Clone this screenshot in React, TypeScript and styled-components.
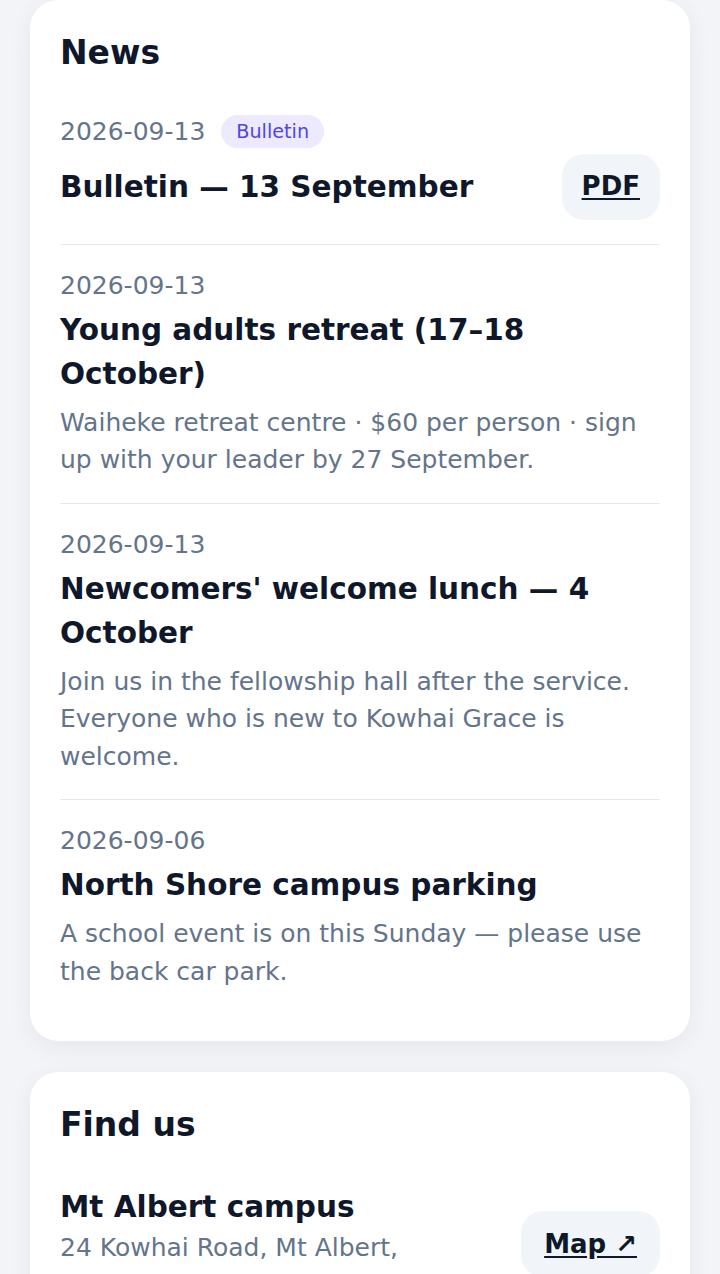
import React from "react";
import styled, { createGlobalStyle } from "styled-components";

interface NewsItem {
  id: string;
  date: string;
  tag?: string;
  title: string;
  body?: string;
  pdf?: boolean;
}

const news: NewsItem[] = [
  { id: "n1", date: "2026-09-13", tag: "Bulletin", title: "Bulletin — 13 September", pdf: true },
  {
    id: "n2",
    date: "2026-09-13",
    title: "Young adults retreat (17–18 October)",
    body: "Waiheke retreat centre · $60 per person · sign up with your leader by 27 September.",
  },
  {
    id: "n3",
    date: "2026-09-13",
    title: "Newcomers' welcome lunch — 4 October",
    body: "Join us in the fellowship hall after the service. Everyone who is new to Kowhai Grace is welcome.",
  },
  {
    id: "n4",
    date: "2026-09-06",
    title: "North Shore campus parking",
    body: "A school event is on this Sunday — please use the back car park.",
  },
];

const campuses = [
  { id: "c1", name: "Mt Albert campus", address: "24 Kowhai Road, Mt Albert, Auckland · Sundays 9:30am" },
];

export default function App() {
  return (
    <>
      <GlobalStyle />
      <Page>
        <Card>
          <CardTitle>News</CardTitle>
          {news.map((item) => (
            <Item key={item.id}>
              <DateRow>
                <DateText>{item.date}</DateText>
                {item.tag && <Tag>{item.tag}</Tag>}
              </DateRow>
              {item.pdf ? (
                <SplitRow $offset={4}>
                  <ItemTitle>{item.title}</ItemTitle>
                  <PillLink href="#">PDF</PillLink>
                </SplitRow>
              ) : (
                <ItemTitle>{item.title}</ItemTitle>
              )}
              {item.body && <Body>{item.body}</Body>}
            </Item>
          ))}
        </Card>

        <Card>
          <CardTitle>Find us</CardTitle>
          {campuses.map((c) => (
            <Item key={c.id}>
              <SplitRow $offset={0}>
                <div>
                  <CampusName>{c.name}</CampusName>
                  <Address>{c.address}</Address>
                </div>
                <PillLink href="#" $padX={23}>
                  Map ↗
                </PillLink>
              </SplitRow>
            </Item>
          ))}
        </Card>
      </Page>
    </>
  );
}

const GlobalStyle = createGlobalStyle`
  html, body {
    margin: 0;
    background: #f2f4f7;
    font-family: "DejaVu Sans", Verdana, sans-serif;
    color: #0f172a;
  }
  * { box-sizing: border-box; }
`;

const Page = styled.main`
  display: flex;
  flex-direction: column;
  gap: 31px;
  padding: 0 30px 40px;
`;

const Card = styled.section`
  background: #ffffff;
  border-radius: 28px;
  padding: 28px 30px 27px;
  box-shadow: 0 6px 24px rgba(15, 23, 42, 0.06);
`;

const CardTitle = styled.h2`
  margin: 0 0 13px;
  font-size: 33px;
  line-height: 1.5;
  font-weight: 700;
  color: #0f172a;
`;

const Item = styled.article`
  padding: 22px 0 24px;
  border-bottom: 1px solid #e5e7eb;

  &:last-child {
    border-bottom: none;
  }
`;

const DateRow = styled.div`
  display: flex;
  align-items: center;
  gap: 16px;
  height: 37px;
`;

const DateText = styled.span`
  font-size: 25px;
  line-height: 37px;
  color: #64748b;
`;

const Tag = styled.span`
  display: inline-block;
  padding: 2px 15px;
  border-radius: 999px;
  background: #ede9fe;
  color: #4f46e5;
  font-size: 19.2px;
  line-height: 29px;
`;

const SplitRow = styled.div<{ $offset: number }>`
  display: flex;
  align-items: center;
  justify-content: space-between;
  gap: 20px;
  margin-top: ${(p) => p.$offset}px;
`;

const ItemTitle = styled.h3`
  margin: 4px 0 0;
  font-size: 29.5px;
  line-height: 44px;
  font-weight: 700;
  color: #0f172a;

  ${SplitRow} > & {
    margin: 0;
  }
`;

const Body = styled.p`
  margin: 8px 0 0;
  font-size: 25px;
  line-height: 37.5px;
  color: #64748b;
`;

const CampusName = styled.h3`
  margin: 0;
  font-size: 29.5px;
  line-height: 44px;
  font-weight: 700;
  color: #0f172a;
`;

const Address = styled.p`
  margin: 0;
  font-size: 25px;
  line-height: 37.5px;
  color: #64748b;
`;

const PillLink = styled.a<{ $padX?: number }>`
  flex: none;
  display: inline-block;
  padding: 14.5px ${(p) => p.$padX ?? 20}px;
  border-radius: 22px;
  background: #f1f5f9;
  color: #0f172a;
  font-size: 26px;
  line-height: 37px;
  font-weight: 700;
  text-decoration: underline;
  text-underline-offset: 3px;
`;
